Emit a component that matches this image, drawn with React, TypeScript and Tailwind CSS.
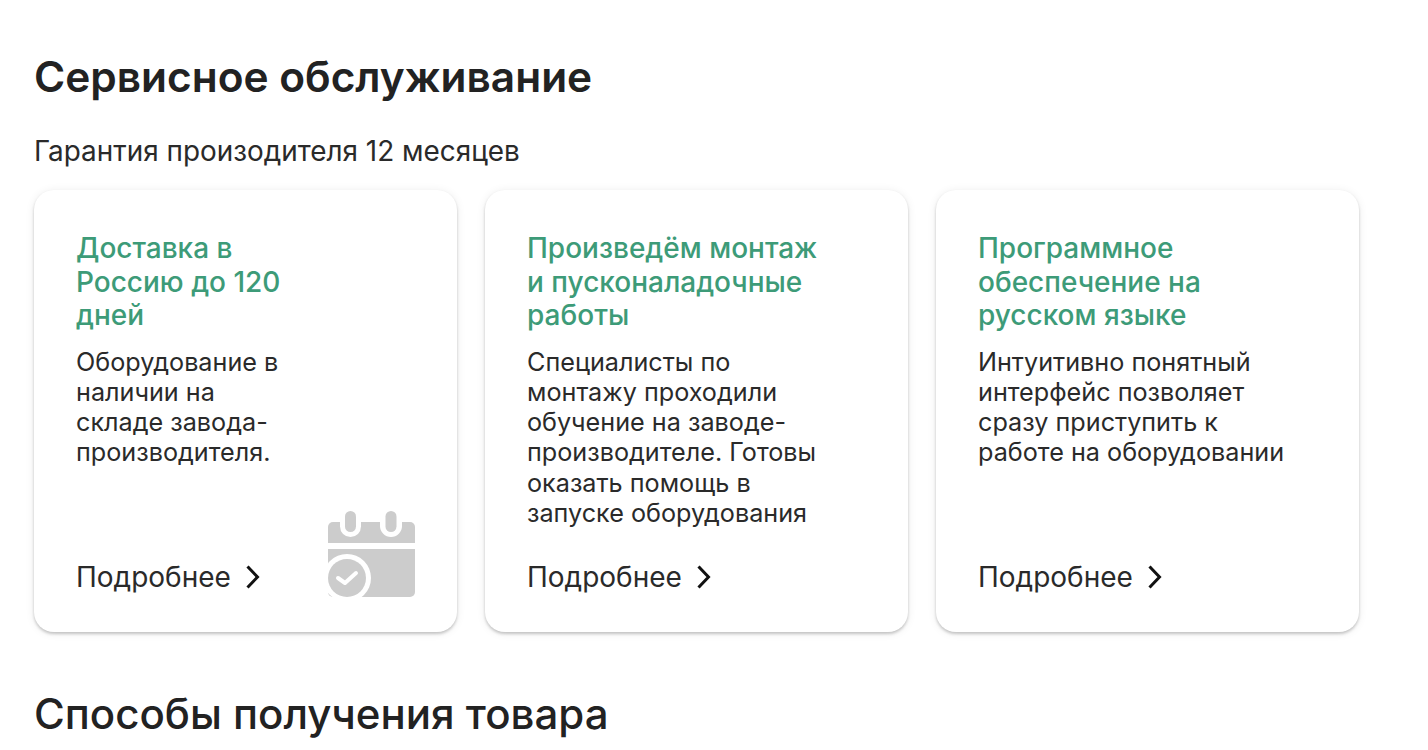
const cards = [
  {
    title: "Доставка в Россию до 120 дней",
    text: "Оборудование в наличии на складе завода-производителя.",
    icon: true,
  },
  {
    title: "Произведём монтаж и пусконаладочные работы",
    text: "Специалисты по монтажу проходили обучение на заводе-производителе. Готовы оказать помощь в запуске оборудования",
  },
  {
    title: "Программное обеспечение на русском языке",
    text: "Интуитивно понятный интерфейс позволяет сразу приступить к работе на оборудовании",
  },
];

function CalendarIcon() {
  return (
    <svg width="87" height="87" viewBox="0 0 87 87" className="absolute right-[42px] bottom-[34px]">
      <path fill="#cccccc" d="M5 11h77a5 5 0 0 1 5 5v16H0V16a5 5 0 0 1 5-5Z" />
      <path fill="#cccccc" d="M0 38h87v43a5 5 0 0 1-5 5H5a5 5 0 0 1-5-5Z" />
      <rect x="12" y="-4" width="21" height="30" rx="10.5" fill="#ffffff" />
      <rect x="52" y="-4" width="22" height="30" rx="11" fill="#ffffff" />
      <rect x="17" y="0" width="11" height="21" rx="5.5" fill="#cccccc" />
      <rect x="57.5" y="0" width="11" height="21" rx="5.5" fill="#cccccc" />
      <circle cx="19" cy="67" r="24" fill="#ffffff" />
      <circle cx="19" cy="67" r="19" fill="#cccccc" />
      <path d="M10 67l7 5 11-10" fill="none" stroke="#ffffff" strokeWidth="4" strokeLinecap="round" strokeLinejoin="round" />
    </svg>
  );
}

export default function App() {
  return (
    <div className="min-h-screen overflow-hidden bg-white font-['Inter',sans-serif] text-[#2a2a2a]">
      <main className="h-[750px] overflow-hidden pl-[34px] pt-[53px]">
        <h2 className="text-[42.4px] leading-[48px] font-semibold text-[#222222]">Сервисное обслуживание</h2>
        <p className="mt-[32px] text-[27.9px] leading-[36px]">Гарантия произодителя 12 месяцев</p>
        <div className="mt-[21px] flex gap-[28px]">
          {cards.map((card) => (
            <div
              key={card.title}
              className="relative flex h-[442px] w-[423px] flex-col rounded-[20px] bg-white pt-[42px] pr-[70px] pb-[39px] pl-[42px] shadow-[0_2px_3px_rgba(0,0,0,0.2),0_1px_10px_rgba(0,0,0,0.08)]"
            >
              <div className={card.icon ? "w-[225px]" : ""}>
                <h3 className="text-[28px] leading-[33.5px] font-medium text-[#3d9b78]">{card.title}</h3>
                <p className="mt-[14px] text-[25.2px] leading-[30.25px]">{card.text}</p>
              </div>
              <div className="mt-auto flex items-center gap-[14px] text-[28px] leading-[32px]">
                <span>Подробнее</span>
                <svg width="16" height="24" viewBox="0 0 16 24" fill="none" stroke="#111111" strokeWidth="3">
                  <path d="M2.5 1.5l10 10.5-10 10.5" />
                </svg>
              </div>
              {card.icon && <CalendarIcon />}
            </div>
          ))}
        </div>
        <h2 className="mt-[58px] text-[42px] leading-[48px] font-medium text-[#222222]">Способы получения товара</h2>
      </main>
    </div>
  );
}
